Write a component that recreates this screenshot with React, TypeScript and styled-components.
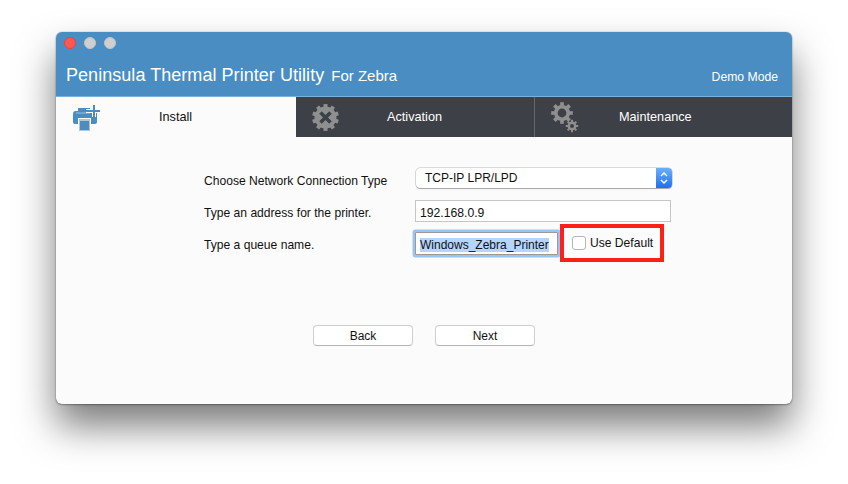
import React from "react";
import styled, { createGlobalStyle } from "styled-components";

const Global = createGlobalStyle`
  html, body { margin: 0; padding: 0; background: #fff; }
  body { font-family: "Liberation Sans", Arial, sans-serif; }
`;

const Stage = styled.div`
  width: 848px;
  height: 484px;
  box-sizing: border-box;
  padding: 32px 56px 80px;
  overflow: hidden;
`;

const Win = styled.div`
  width: 736px;
  height: 372px;
  border-radius: 6px;
  overflow: hidden;
  background: #fbfbfb;
  box-shadow: 0 0 1px rgba(0,0,0,.55), 0 1px 2px rgba(0,0,0,.3), 0 22px 38px rgba(0,0,0,.52);
  display: flex;
  flex-direction: column;
`;

const Header = styled.header`
  height: 65px;
  box-sizing: border-box;
  background: #4a8dc3;
  border-bottom: 1px solid #7fb0d8;
  display: flex;
  flex-direction: column;
  padding: 5px 14px 0 8px;
`;

const Lights = styled.div`
  display: flex;
  gap: 8px;
`;

const Light = styled.span<{ $c: string; $b: string }>`
  width: 12px;
  height: 12px;
  box-sizing: border-box;
  border-radius: 50%;
  background: ${(p) => p.$c};
  border: 1px solid ${(p) => p.$b};
`;

const TitleRow = styled.div`
  display: flex;
  align-items: baseline;
  margin: 14px 0 0 2px;
  color: #fff;
`;

const Title = styled.div`
  font-size: 18px;
  line-height: 24px;
  letter-spacing: 0.045px;
`;

const Sub = styled.div`
  font-size: 15px;
  margin-left: 7px;
`;

const Demo = styled.div`
  font-size: 12.2px;
  margin-left: auto;
`;

const Tabs = styled.nav`
  height: 40px;
  display: grid;
  grid-template-columns: 240px 238px 258px;
  background: #3d4046;
`;

const Tab = styled.div<{ $active?: boolean; $sep?: boolean; $label: number }>`
  position: relative;
  display: flex;
  align-items: center;
  font-size: 12.7px;
  color: ${(p) => (p.$active ? "#111" : "#fff")};
  background: ${(p) => (p.$active ? "#fbfbfb" : "transparent")};
  border-left: ${(p) => (p.$sep ? "1px solid #63666b" : "none")};
  padding-left: ${(p) => p.$label}px;
  box-sizing: border-box;
`;

const TabIcon = styled.svg<{ $x?: number }>`
  position: absolute;
  top: 5px;
  left: ${(p) => p.$x ?? 16}px;
`;

const Body = styled.main`
  flex: 1;
  display: flex;
  flex-direction: column;
  padding: 31px 0 0 148px;
  font-size: 12.1px;
  color: #111;
`;

const Form = styled.div`
  display: grid;
  grid-template-columns: 211px auto;
  align-items: start;
`;

const Label = styled.label<{ $top: number }>`
  line-height: 14px;
  margin-top: ${(p) => p.$top}px;
`;

const SelectBox = styled.div`
  width: 256px;
  height: 20px;
  box-sizing: border-box;
  margin-left: 1px;
  border-radius: 4px;
  background: #fff;
  box-shadow: 0 0 0 .5px rgba(0,0,0,.25), 0 1px 1px rgba(0,0,0,.25);
  display: flex;
  align-items: center;
  justify-content: space-between;
  padding-left: 9px;
  overflow: hidden;
  font-size: 12px;
`;

const Stepper = styled.span`
  width: 16px;
  height: 20px;
  background: linear-gradient(#6cb0fb, #1e70ec);
  display: flex;
  align-items: center;
  justify-content: center;
`;

const TextInput = styled.div`
  width: 256px;
  height: 22px;
  box-sizing: border-box;
  margin-top: 12px;
  border: 1px solid #c6c6c6;
  background: #fff;
  padding: 4px 0 0 4px;
  font-size: 12.2px;
  line-height: 16px;
`;

const QueueRow = styled.div`
  display: flex;
  align-items: flex-start;
`;

const FocusInput = styled.div`
  width: 143px;
  height: 23px;
  box-sizing: border-box;
  margin-top: 10px;
  border: 1px solid #9a9a9a;
  box-shadow: 0 0 0 2.5px #9cc4f2;
  border-radius: 1px;
  background: #fff;
  padding: 5px 0 0 4px;
  font-size: 12px;
  line-height: 14px;
  white-space: nowrap;
`;

const Selected = styled.span`
  background: #b5d5fd;
  display: inline-block;
`;

const Highlight = styled.div`
  width: 104px;
  height: 38px;
  box-sizing: border-box;
  margin: 2px 0 0 2px;
  border: 4px solid #fd2018;
  display: flex;
  align-items: center;
  padding-left: 8px;
`;

const CheckBox = styled.span`
  width: 14px;
  height: 14px;
  box-sizing: border-box;
  border: 1px solid #b4b4b4;
  border-radius: 3px;
  background: #fff;
  margin-right: 4px;
`;

const Buttons = styled.div`
  display: flex;
  gap: 22px;
  margin: 63px 0 0 109px;
`;

const Btn = styled.button`
  width: 100px;
  height: 21px;
  padding: 1px 0 0;
  border: 1px solid #cfcfcf;
  border-bottom-color: #b4b4b4;
  border-radius: 4px;
  background: #fff;
  font: 12px "Liberation Sans", Arial, sans-serif;
  color: #111;
`;

/* Each bar spans the full diameter, so it draws two opposite teeth. */
const gear = (cx: number, cy: number, r: number, teeth: number, tw: number) => {
  const bars = teeth / 2;
  const out: React.ReactNode[] = [];
  for (let i = 0; i < bars; i++) {
    out.push(
      <rect
        key={`${cx}-${i}`}
        x={cx - tw / 2}
        y={cy - r}
        width={tw}
        height={r * 2}
        transform={`rotate(${(i * 180) / bars} ${cx} ${cy})`}
      />
    );
  }
  return out;
};

export default function App() {
  return (
    <Stage>
      <Global />
      <Win>
        <Header>
          <Lights>
            <Light $c="#fc5753" $b="#df4744" />
            <Light $c="#cfcfcf" $b="#c4c4c4" />
            <Light $c="#cfcfcf" $b="#c4c4c4" />
          </Lights>
          <TitleRow>
            <Title>Peninsula Thermal Printer Utility</Title>
            <Sub>For Zebra</Sub>
            <Demo>Demo Mode</Demo>
          </TitleRow>
        </Header>
        <Tabs>
          <Tab $active $label={103}>
            <TabIcon width="30" height="30" viewBox="0 0 30 30">
              <path fill="#4a8dc3" d="M3 9h19a3 3 0 0 1 3 3v8a2 2 0 0 1-2 2H3a2 2 0 0 1-2-2v-8a3 3 0 0 1 2-3z" />
              <path fill="#4a8dc3" d="M6 6h12v3H6z" />
              <path d="M4 11h14" stroke="#9cc2e1" strokeWidth="1" />
              <path fill="#fbfbfb" d="M6 16h13v14H6z" />
              <path fill="#a9c8e3" d="M7 17h11v12H7z" />
              <path fill="#4a8dc3" d="M8 19h9v9H8z" />
              <path d="M22 3v12M14 9h14" stroke="#fbfbfb" strokeWidth="4" />
              <path d="M22 3v12M14 9h14" stroke="#4a8dc3" strokeWidth="2" />
            </TabIcon>
            Install
          </Tab>
          <Tab $label={91}>
            <TabIcon width="30" height="30" viewBox="0 0 30 30" $x={15}>
              <g fill="#8f8f8f">
                {gear(14.5, 15.5, 13.4, 10, 4)}
                <circle cx="14.5" cy="15.5" r="11" />
              </g>
              <path d="M9.5 10.5l10 10M19.5 10.5l-10 10" stroke="#3d4046" strokeWidth="3.6" />
            </TabIcon>
            Activation
          </Tab>
          <Tab $sep $label={84}>
            <TabIcon width="34" height="32" viewBox="0 0 34 32" $x={16}>
              <g fill="#8f8f8f">
                {gear(11, 11, 10.8, 8, 3.6)}
                <circle cx="11" cy="11" r="8" />
                {gear(21, 24, 6.2, 8, 2)}
                <circle cx="21" cy="24" r="4.4" />
              </g>
              <circle cx="11" cy="11" r="4.4" fill="#3d4046" />
              <circle cx="21" cy="24" r="2" fill="#3d4046" />
            </TabIcon>
            Maintenance
          </Tab>
        </Tabs>
        <Body>
          <Form>
            <Label $top={6}>Choose Network Connection Type</Label>
            <SelectBox>
              TCP-IP LPR/LPD
              <Stepper>
                <svg width="10" height="14" viewBox="0 0 10 14" fill="none" stroke="#fff" strokeWidth="1.5">
                  <path d="M2 5l3-3 3 3M2 9l3 3 3-3" />
                </svg>
              </Stepper>
            </SelectBox>
            <Label $top={18}>Type an address for the printer.</Label>
            <TextInput>192.168.0.9</TextInput>
            <Label $top={16}>Type a queue name.</Label>
            <QueueRow>
              <FocusInput>
                <Selected>Windows_Zebra_Printer</Selected>
              </FocusInput>
              <Highlight>
                <CheckBox />
                Use Default
              </Highlight>
            </QueueRow>
          </Form>
          <Buttons>
            <Btn>Back</Btn>
            <Btn>Next</Btn>
          </Buttons>
        </Body>
      </Win>
    </Stage>
  );
}
